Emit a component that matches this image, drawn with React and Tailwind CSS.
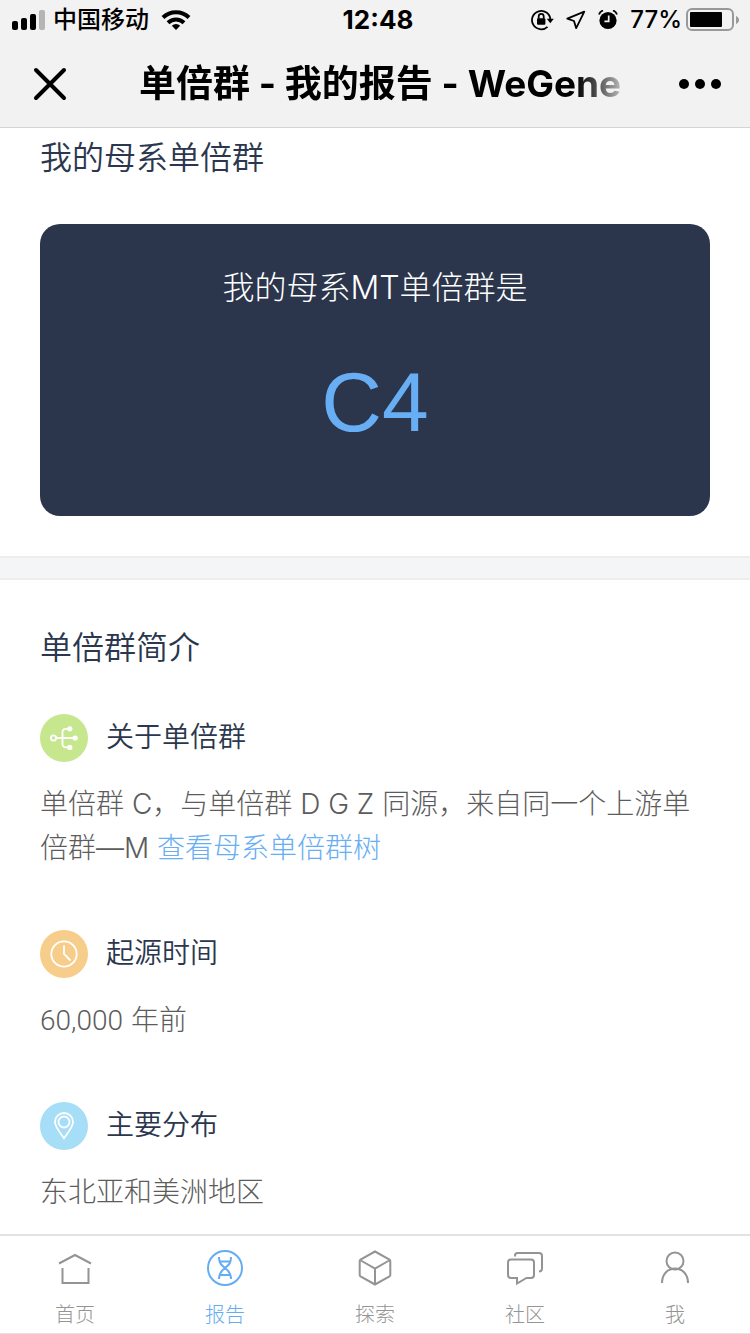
import React from 'react';

const bodyFont = "font-[Inter,'Noto_Sans_CJK_SC',sans-serif]";

function StatusBar() {
  return (
    <div className="grid grid-cols-3 items-center h-10 px-3 text-2xl leading-10">
      <div className="flex items-center gap-2">
        <svg width="33" height="20" viewBox="0 0 33 20" aria-hidden="true">
          <rect x="0" y="11" width="6" height="9" rx="2" />
          <rect x="9" y="8" width="6" height="12" rx="2" />
          <rect x="18" y="4" width="6" height="16" rx="2" />
          <rect x="27" y="0" width="6" height="20" rx="2" fill="#b4b5b6" />
        </svg>
        <span className="whitespace-nowrap font-medium">中国移动</span>
        <svg className="ml-1" width="30" height="20" viewBox="0 0 30 20" fill="none" stroke="#000" strokeWidth="4" aria-hidden="true">
          <path d="M2 7.5a18.5 18.5 0 0 1 26 0" />
          <path d="M7 12.7a11.5 11.5 0 0 1 16 0" />
          <path d="M15 20l-4.2-4.2a6 6 0 0 1 8.4 0z" fill="#000" stroke="none" />
        </svg>
      </div>
      <time className="pl-1.5 text-center text-[26px] font-bold">12:48</time>
      <div className="flex items-center justify-end">
        <svg width="23" height="22" viewBox="0 0 23 22" fill="none" stroke="#000" strokeWidth="1.8" aria-hidden="true">
          <path d="M16.500 17.800A9.200 9.200 0 1 1 19.400 10.500" />
          <path d="M15.800 9.700h7l-3.500 4.500z" fill="#000" stroke="none" />
          <rect x="6" y="9.300" width="8.400" height="6.500" rx="1" fill="#000" stroke="none" />
          <path d="M7.700 9.800V7.300a2.500 2.500 0 0 1 5 0v2.500" />
        </svg>
        <svg className="ml-3" width="20" height="20" viewBox="0 0 20 20" fill="none" stroke="#000" strokeWidth="1.8" strokeLinejoin="round" aria-hidden="true">
          <path d="M18.300 1.700L1.300 8.700l6.700 2.300 2.200 7.200z" />
        </svg>
        <svg className="ml-3" width="20" height="20" viewBox="0 0 20 20" aria-hidden="true">
          <circle cx="10" cy="10.500" r="8.600" />
          <path d="M1 4.500a6 6 0 0 1 4-4M15 .5a6 6 0 0 1 4 4" fill="none" stroke="#000" strokeWidth="1.8" />
          <path d="M10.700 5.500v5.800H6.400" fill="none" stroke="#f2f2f2" strokeWidth="1.7" />
        </svg>
        <span className="ml-3 font-medium">77%</span>
        <svg className="ml-1 -mr-0.5 shrink-0" width="54" height="24" viewBox="0 0 54 24" aria-hidden="true">
          <rect x="1" y="1" width="46" height="21" rx="5" fill="none" stroke="#98999a" strokeWidth="2" />
          <rect x="4" y="4" width="32" height="15" rx="1" />
          <path d="M50 8c4 1.500 4 6.500 0 8z" fill="#98999a" />
        </svg>
      </div>
    </div>
  );
}

function NavBar() {
  return (
    <div className="flex items-center h-[87px] pt-px pl-8 pr-7">
      <button type="button" aria-label="关闭">
        <svg width="36" height="36" viewBox="0 0 36 36" stroke="#000" strokeWidth="4" strokeLinecap="round">
          <path d="M4 4l28 28M32 4L4 32" />
        </svg>
      </button>
      <h1 className="flex-1 ml-[71px] mr-[52px] overflow-hidden whitespace-nowrap text-[37px] leading-[48px] font-bold bg-linear-to-r from-black from-88% to-[#d0d0d0] bg-clip-text text-transparent">
        单倍群 - 我的报告 - WeGene
      </h1>
      <button type="button" aria-label="更多">
        <svg width="44" height="12" viewBox="0 0 44 12">
          <circle cx="6" cy="6" r="5" />
          <circle cx="22" cy="6" r="5" />
          <circle cx="38" cy="6" r="5" />
        </svg>
      </button>
    </div>
  );
}

function TreeIcon() {
  return (
    <svg width="48" height="48" viewBox="0 0 48 48" fill="none" stroke="#fff" strokeWidth="1.800" aria-hidden="true">
      <circle cx="13.500" cy="24" r="2.600" />
      <path d="M16 24h20M30 14.800h-4q-3.500 0-3.500 3.500v11.500q0 3.500 3.500 3.500h4" />
      <circle cx="29.800" cy="14.800" r="2.600" fill="#fff" stroke="none" />
      <circle cx="35.200" cy="24" r="2.600" fill="#fff" stroke="none" />
      <circle cx="29.800" cy="33.400" r="2.600" fill="#fff" stroke="none" />
    </svg>
  );
}

function ClockIcon() {
  return (
    <svg width="48" height="48" viewBox="0 0 48 48" fill="none" stroke="#fff" strokeWidth="1.800" aria-hidden="true">
      <circle cx="24" cy="24" r="12.700" />
      <path d="M24 15.500V24l6.500 6.500" />
    </svg>
  );
}

function PinIcon() {
  return (
    <svg width="48" height="48" viewBox="0 0 48 48" fill="none" stroke="#fff" strokeWidth="1.800" aria-hidden="true">
      <path d="M24 36.200c-3.500-5.200-9-11-9-16.200a9 9 0 0 1 18 0c0 5.200-5.500 11-9 16.200z" />
      <circle cx="24" cy="20" r="5.500" />
    </svg>
  );
}

function InfoItem({ icon, color, title, children }) {
  return (
    <section>
      <div className="flex gap-[18px]">
        <span className={`size-12 rounded-full ${color}`}>{icon}</span>
        <h3 className="text-[28px] leading-[46px] font-[350] text-[#2b374e]">{title}</h3>
      </div>
      <p className="mt-5 text-[28px] leading-[44px] font-light text-[#5c5c5c]">{children}</p>
    </section>
  );
}

const tabs = [
  {
    label: '首页',
    icon: <path d="M4 14.500L20 6l16 8.500M7.500 19v15h26V19" />,
  },
  {
    label: '报告',
    active: true,
    icon: (
      <>
        <circle cx="20" cy="19" r="17" />
        <path d="M14 8c0 6 2 8 6 11s6 5.500 6 11M26 8c0 6-2 8-6 11s-6 5.500-6 11M15 12.500h10M15 26h10" />
      </>
    ),
  },
  {
    label: '探索',
    icon: (
      <path d="M20 2.500l14.500 8q.8.500.8 1.500v14q0 1-.8 1.500L20 35.500l-14.500-8q-.8-.5-.8-1.500V12q0-1 .8-1.500zM5 11l15 8.500L35 11M20 19.500v16" />
    ),
  },
  {
    label: '社区',
    icon: (
      <>
        <path d="M6 10.500h20q3 0 3 3V26q0 3-3 3h-4.500L12 34.500V29H6q-3 0-3-3V13.500q0-3 3-3z" />
        <path d="M10 7.500V6.500q0-2.500 2.500-2.500H34q3 0 3 3v12.500q0 3-3 3" />
      </>
    ),
  },
  {
    label: '我',
    icon: (
      <>
        <circle cx="20" cy="12" r="8.500" />
        <path d="M7 34c0-8 5-14.500 13-14.500S33 26 33 34" />
      </>
    ),
  },
];

function TabBar() {
  return (
    <nav className="flex h-[100px] bg-white border-t-2 border-b border-[#e2e2e2] font-light">
      {tabs.map((tab) => (
        <a
          key={tab.label}
          href="#"
          className={`flex-1 flex flex-col items-center pt-[13px] ${tab.active ? 'text-[#65adf3]' : 'text-[#949494]'}`}
        >
          <svg width="40" height="40" viewBox="0 0 40 40" fill="none" stroke="currentColor" strokeWidth="2" aria-hidden="true">
            {tab.icon}
          </svg>
          <span className="mt-2.5 text-xl leading-8">{tab.label}</span>
        </a>
      ))}
    </nav>
  );
}

function App() {
  return (
    <div lang="zh-CN" className={`min-h-screen flex flex-col bg-white text-black ${bodyFont}`}>
      <header className="bg-[#f2f2f3] border-b border-[#d3d4d5]">
        <StatusBar />
        <NavBar />
      </header>

      <main className="flex-1">
        <section className="px-10 pt-1.5 pb-10">
          <h2 className="text-[32px] leading-[48px] font-[350] text-[#2b374e]">我的母系单倍群</h2>
          <div className="mt-[42px] h-[292px] pt-10 rounded-[20px] bg-[#2b364c] text-center">
            <p className="text-[32px] leading-[48px] font-light text-white">我的母系MT单倍群是</p>
            <p className="mt-10 text-[84px] leading-[100px] text-[#68aef4] font-['Liberation_Sans',sans-serif]">C4</p>
          </div>
        </section>

        <div className="h-6 bg-[#f4f5f7] border-y-2 border-[#ededee]" />

        <section className="px-10 pt-11 pb-5">
          <h2 className="text-[32px] leading-[48px] font-[350] text-[#2b374e]">单倍群简介</h2>
          <div className="mt-[42px] flex flex-col gap-[60px]">
            <InfoItem icon={<TreeIcon />} color="bg-[#c6e78e]" title="关于单倍群">
              单倍群 C，与单倍群 D G Z 同源，来自同一个上游单倍群—M{' '}
              <a href="#" className="text-[#68aef4]">查看母系单倍群树</a>
            </InfoItem>
            <InfoItem icon={<ClockIcon />} color="bg-[#f7cd8b]" title="起源时间">
              <span className="font-[Roboto,sans-serif] leading-none">60,000</span> 年前
            </InfoItem>
            <InfoItem icon={<PinIcon />} color="bg-[#a6ddf7]" title="主要分布">
              东北亚和美洲地区
            </InfoItem>
          </div>
        </section>
      </main>

      <TabBar />
    </div>
  );
}

export default App;
